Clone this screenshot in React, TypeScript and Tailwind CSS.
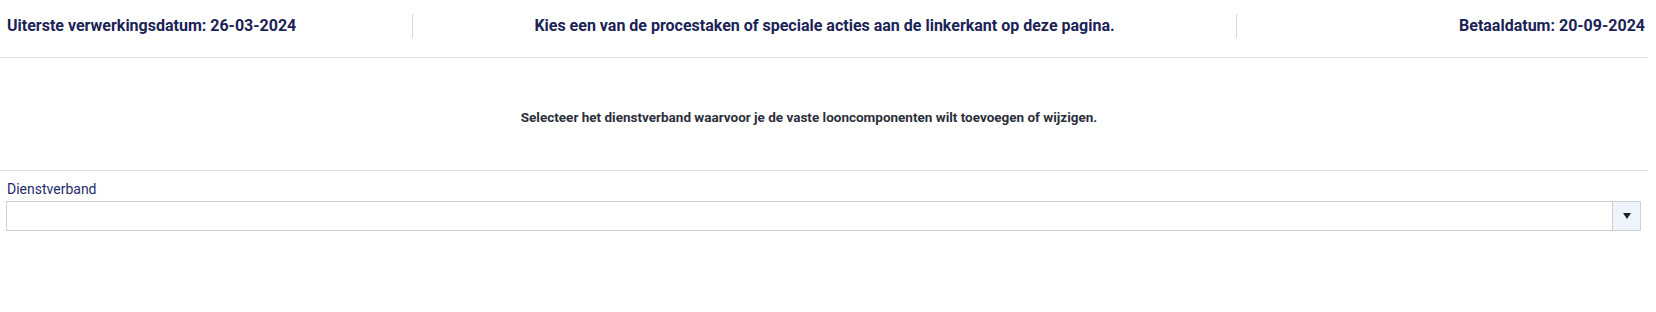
import React from 'react';

const App: React.FC = () => {
  return (
    <div className="w-[1656px] h-[312px] bg-white font-['Roboto',_'Liberation_Sans',_sans-serif]">
      <div className="w-[1648px]">
        {/* Header with dates */}
        <div className="grid grid-cols-[1fr_2fr_1fr] border-b border-[#e2e2e2] pt-[14px] pb-[19px]">
          <div className="h-[24px] flex items-center pl-[7px] text-[16px] font-bold text-[#1b2356]">
            Uiterste verwerkingsdatum: 26-03-2024
          </div>
          <div className="h-[24px] flex items-center justify-center border-l border-[#c8d8ea] text-[16px] font-bold text-[#1b2356]">
            Kies een van de procestaken of speciale acties aan de linkerkant op deze pagina.
          </div>
          <div className="h-[24px] flex items-center justify-end border-l border-[#c8d8ea] pr-[3px] text-[16px] font-bold text-[#1b2356]">
            Betaaldatum: 20-09-2024
          </div>
        </div>

        {/* Instruction */}
        <div className="h-[113px] flex items-center justify-center border-b border-[#e2e2e2] pr-[30px]">
          <p className="text-[13.5px] font-bold text-[#2b303b] pt-[6px]">
            Selecteer het dienstverband waarvoor je de vaste looncomponenten wilt toevoegen of wijzigen.
          </p>
        </div>

        {/* Select */}
        <div className="px-[6px] pt-[10px]">
          <label className="block text-[14px] leading-[16px] text-[#1f2a6e] pl-px mb-[4px]">Dienstverband</label>
          <div className="flex h-[30px] border border-[#cfcfcf] bg-white mr-px">
            <div className="flex-1"></div>
            <div className="w-[28px] flex items-center justify-center bg-[#eef4fb] border-l border-[#cfcfcf]">
              <svg width="8" height="6" viewBox="0 0 8 6">
                <path d="M0 0 L8 0 L4 6 Z" fill="#222" />
              </svg>
            </div>
          </div>
        </div>
      </div>
    </div>
  );
};

export default App;
